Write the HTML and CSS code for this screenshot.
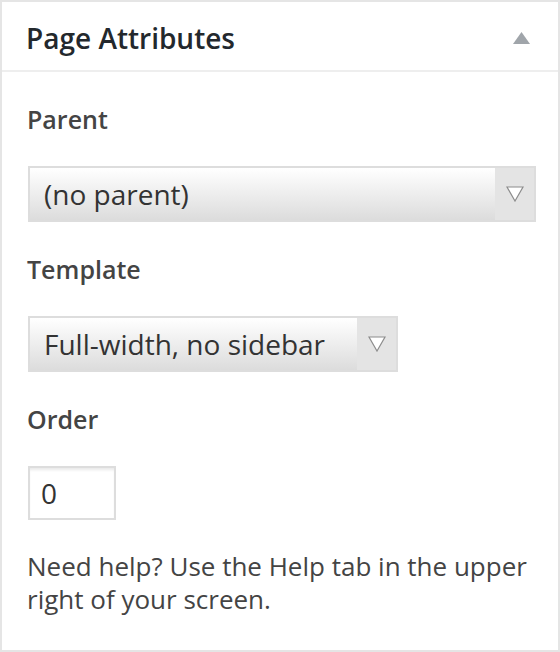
FILE: index.html
```html
<!DOCTYPE html>
<html>
<head>
<meta charset="utf-8">
<link rel="stylesheet" href="styles.css">
</head>
<body>
<div class="postbox">
  <div class="postbox-header">
    <h2 class="title">Page Attributes</h2>
    <svg class="toggle" width="17" height="12" viewBox="0 0 17 12"><polygon points="8.5,0 17,12 0,12" fill="#a0a5aa"/></svg>
  </div>
  <div class="inside">
    <p class="label">Parent</p>
    <div class="select select-wide">
      <span class="select-text">(no parent)</span>
      <span class="select-arrow"><svg width="18" height="16" viewBox="0 0 18 16"><polygon points="1,1 17,1 9,15" fill="#fff" stroke="#8c8c8c" stroke-width="1.2"/></svg></span>
    </div>
    <p class="label">Template</p>
    <div class="select select-template">
      <span class="select-text">Full-width, no sidebar</span>
      <span class="select-arrow"><svg width="18" height="16" viewBox="0 0 18 16"><polygon points="1,1 17,1 9,15" fill="#fff" stroke="#8c8c8c" stroke-width="1.2"/></svg></span>
    </div>
    <p class="label">Order</p>
    <div class="order-input">0</div>
    <p class="help">Need help? Use the Help tab in the upper right of your screen.</p>
  </div>
</div>
</body>
</html>
```
FILE: styles.css
```css
html, body {
  margin: 0;
  padding: 0;
  background: #fff;
}
body {
  font-family: "Open Sans", "Noto Sans", sans-serif;
}
.postbox {
  box-sizing: border-box;
  width: 560px;
  height: 652px;
  border: 2px solid #e5e5e5;
  background: #fff;
}
.postbox-header {
  display: flex;
  align-items: center;
  justify-content: space-between;
  height: 64px;
  padding: 4px 28px 0 24px;
  border-bottom: 2px solid #eeeeee;
}
.title {
  margin: 0;
  font-size: 28px;
  font-weight: 600;
  color: #23282d;
  line-height: 36px;
}
.toggle {
  display: block;
}
.inside {
  padding: 0 22px 0 26px;
}
.label {
  margin: 31px 0 31px -1px;
  font-size: 25px;
  line-height: 32px;
  font-weight: 600;
  color: #444;
}
.select {
  box-sizing: border-box;
  display: flex;
  height: 56px;
  border: 2px solid #dddddd;
  background: linear-gradient(#ffffff, #dcdcdc);
}
.select-wide {
  width: 508px;
}
.select-template {
  width: 370px;
}
.select-text {
  flex: 1;
  display: flex;
  align-items: center;
  padding-left: 14px;
  font-size: 28px;
  color: #333;
}
.select-arrow {
  width: 39px;
  display: flex;
  align-items: center;
  justify-content: center;
  background: #e4e4e4;
}
.select-arrow svg {
  display: block;
}
.order-input {
  box-sizing: border-box;
  width: 88px;
  height: 54px;
  border: 2px solid #dddddd;
  box-shadow: inset 0 3px 3px -1px rgba(0,0,0,0.09);
  padding-left: 11px;
  display: flex;
  align-items: center;
  font-size: 28px;
  color: #333;
}
.help {
  margin: 30px 0 0 -1px;
  font-size: 26px;
  line-height: 33px;
  color: #444;
}
```
